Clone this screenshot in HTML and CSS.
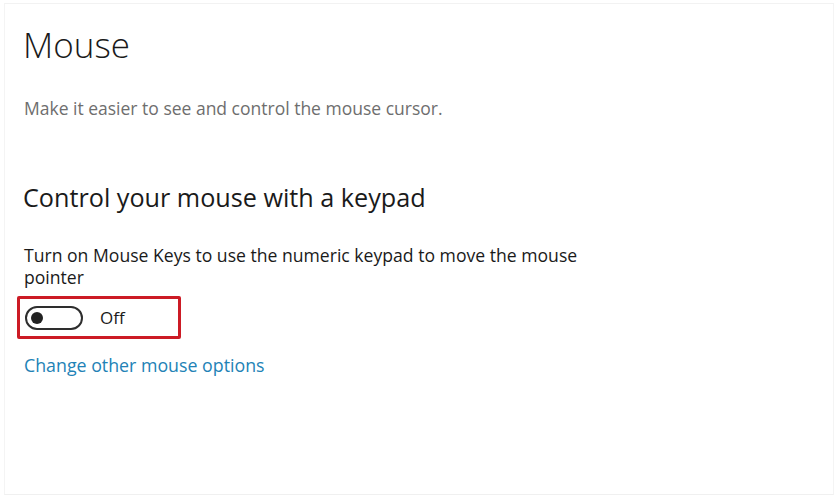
FILE: index.html
```html
<!DOCTYPE html>
<html lang="en">
<head>
<meta charset="utf-8">
<title>Mouse</title>
<link rel="stylesheet" href="styles.css">
</head>
<body>
<div class="frame">
  <main class="page">
    <h1 class="title">Mouse</h1>
    <p class="subtitle">Make it easier to see and control the mouse cursor.</p>
    <h2 class="section">Control your mouse with a keypad</h2>
    <p class="desc">Turn on Mouse Keys to use the numeric keypad to move the mouse pointer</p>
    <div class="highlight">
      <span class="toggle"><span class="knob"></span></span>
      <span class="state">Off</span>
    </div>
    <a class="link" href="#">Change other mouse options</a>
  </main>
</div>
</body>
</html>
```
FILE: styles.css
```css
html, body {
  margin: 0;
  padding: 0;
  background: #ffffff;
}
body {
  width: 836px;
  height: 496px;
  overflow: hidden;
  font-family: "Open Sans", "Noto Sans", sans-serif;
  color: #000;
}
.frame {
  box-sizing: border-box;
  width: 836px;
  height: 496px;
  padding: 3px 2px 1px 4px;
}
.page {
  box-sizing: border-box;
  height: 100%;
  border-top: 1px solid #f2f2f2;
  border-left: 1px solid #f4f4f4;
  border-right: 1px solid #f4f4f4;
  border-bottom: 1px solid #f0f0f0;
  padding: 19px 0 0 18px;
  display: flex;
  flex-direction: column;
  align-items: flex-start;
}
.title {
  margin: 0;
  font-size: 35px;
  font-weight: 300;
  line-height: 44px;
  color: #1a1a1a;
}
.subtitle {
  margin: 29px 0 0 1px;
  font-size: 17.5px;
  line-height: 24px;
  color: #6e6e6e;
}
.section {
  margin: 61px 0 0 0;
  font-size: 25.2px;
  font-weight: 400;
  line-height: 32px;
  color: #1a1a1a;
}
.desc {
  margin: 31px 0 0 1px;
  width: 575px;
  font-size: 17.6px;
  line-height: 22px;
  color: #1a1a1a;
}
.highlight {
  margin: 8px 0 0 -6px;
  width: 164px;
  height: 43px;
  box-sizing: border-box;
  border: 3px solid #cc1b25;
  border-radius: 2px;
  display: flex;
  align-items: center;
  padding-left: 5px;
  gap: 17px;
}
.toggle {
  box-sizing: border-box;
  width: 58px;
  height: 24px;
  border: 2px solid #2e2e2e;
  border-radius: 12px;
  display: flex;
  align-items: center;
  padding-left: 4px;
}
.knob {
  width: 12px;
  height: 12px;
  border-radius: 50%;
  background: #222;
}
.state {
  font-size: 17px;
  color: #1a1a1a;
}
.link {
  margin: 14px 0 0 1px;
  font-size: 17.8px;
  line-height: 24px;
  color: #2282b6;
  text-decoration: none;
}
```
